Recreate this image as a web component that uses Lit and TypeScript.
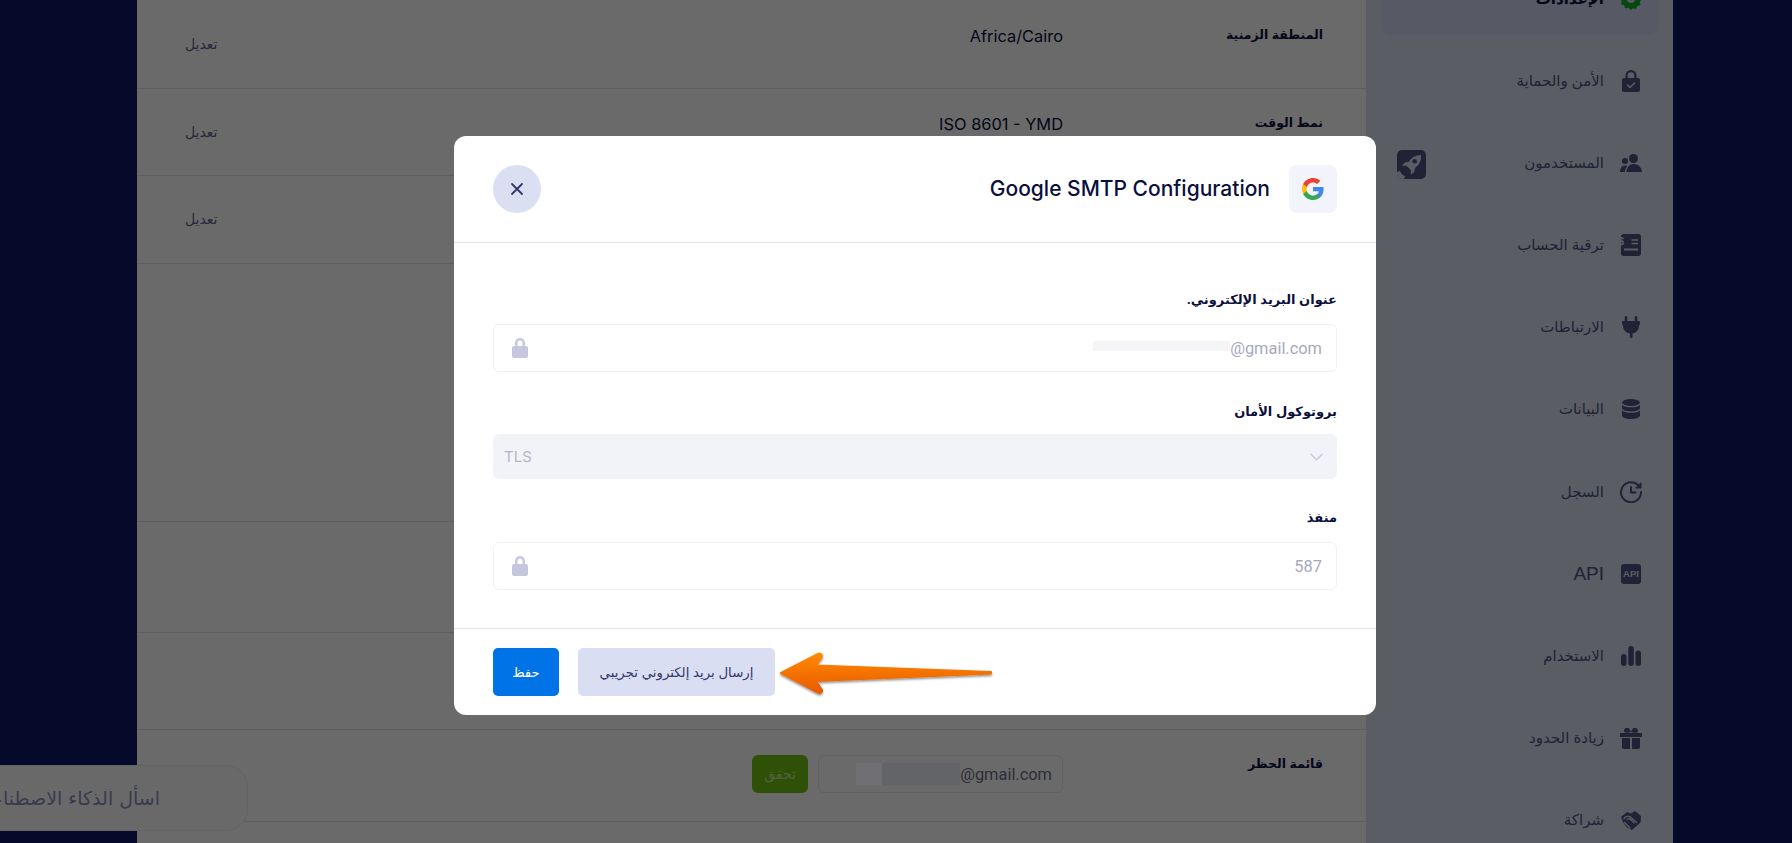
import { LitElement, html, css, svg } from "lit";
import { customElement } from "lit/decorators.js";

const ICONS: Record<string, unknown> = {
  gear: svg`<svg viewBox="0 0 22 22" width="22" height="22"><path fill="currentColor" fill-rule="evenodd" d="M11 0l2.6 2.2 3.3-.7 1 3.2 3.1 1.1-.7 3.3L22 11l-2.2 2.6.7 3.3-3.2 1-1.1 3.1-3.3-.7L11 22l-2.6-2.2-3.3.7-1-3.2-3.1-1.1.7-3.3L0 11l2.2-2.6-.7-3.3 3.2-1 1.1-3.1 3.3.7zM11 7a4 4 0 100 8 4 4 0 000-8z"/></svg>`,
  shield: svg`<svg viewBox="0 0 18 22" width="18" height="22"><path fill="currentColor" d="M9 0a5.500 5.500 0 015.500 5.500V8H16a2 2 0 012 2v10a2 2 0 01-2 2H2a2 2 0 01-2-2V10a2 2 0 012-2h1.500V5.500A5.500 5.500 0 019 0zm0 2.200a3.300 3.300 0 00-3.300 3.300V8h6.600V5.500A3.300 3.300 0 009 2.200z"/><path fill="none" stroke="var(--panel)" stroke-width="1.500" stroke-linecap="round" stroke-linejoin="round" d="M5.500 15l2.500 2.500 4.500-4.500"/></svg>`,
  users: svg`<svg viewBox="0 0 22 18" width="22" height="18"><circle cx="13.500" cy="4.500" r="4.500" fill="currentColor"/><circle cx="5" cy="7" r="3" fill="currentColor"/><path fill="currentColor" d="M6.500 18c0-4.500 3-8 7.200-8s8.300 3.500 8.300 8zM0 18c0-3.500 1.800-6.500 4.800-6.500 1 0 1.900.3 2.600.8C5.800 13.800 5 15.800 5 18z"/></svg>`,
  invoice: svg`<svg viewBox="0 0 20 22" width="20" height="22"><rect width="20" height="22" rx="2.500" fill="currentColor"/><text x="3" y="11" font-size="10" font-weight="700" font-family="Liberation Sans, sans-serif" fill="var(--panel)">$</text><path stroke="var(--panel)" stroke-width="1.600" d="M10.500 6h6.500M10.500 9.500h6.500"/><path stroke="var(--panel)" stroke-width="2" d="M3 15.500h14"/></svg>`,
  plug: svg`<svg viewBox="0 0 18 22" width="18" height="22"><path fill="currentColor" d="M4 0a1.300 1.300 0 011.300 1.300V5H12.700V1.300a1.300 1.300 0 012.600 0V5H17a1 1 0 011 1v2a1 1 0 01-1 1v1a7.500 7.500 0 01-6.500 7.400V20.700a1.300 1.300 0 01-2.600 0V17.400A7.500 7.500 0 011 10V9a1 1 0 01-1-1V6a1 1 0 011-1h1.700V1.300A1.300 1.300 0 014 0z"/></svg>`,
  db: svg`<svg viewBox="0 0 18 20" width="18" height="20"><ellipse cx="9" cy="3.500" rx="9" ry="3.500" fill="currentColor"/><path fill="currentColor" d="M0 5.700C1.500 7.500 5 8.300 9 8.300s7.500-.8 9-2.600V9c0 1.900-4 3.400-9 3.400S0 10.900 0 9zM0 11.200c1.500 1.800 5 2.600 9 2.600s7.500-.8 9-2.600v5.300c0 1.900-4 3.500-9 3.500s-9-1.600-9-3.500z"/></svg>`,
  history: svg`<svg viewBox="0 0 22 22" width="22" height="22" fill="none" stroke="currentColor" stroke-width="2" stroke-linecap="round" stroke-linejoin="round"><path d="M19 5.200A10 10 0 1021 11"/><path d="M11 6v5.500h4.500"/><path fill="currentColor" stroke-width="1" d="M21 2v5h-5z"/></svg>`,
  bars: svg`<svg viewBox="0 0 20 20" width="20" height="20" fill="currentColor"><rect y="8" width="5.500" height="12" rx="2.700"/><rect x="7.300" width="5.500" height="20" rx="2.700"/><rect x="14.500" y="4.500" width="5.500" height="15.500" rx="2.700"/></svg>`,
  gift: svg`<svg viewBox="0 0 22 22" width="22" height="22" fill="currentColor"><path fill-rule="evenodd" d="M0 6h22v4H0zM7 1a2.500 2.500 0 012.800 1.300L11 5 8 5.800H6A2.300 2.300 0 017 1zm8 0a2.300 2.300 0 011 4.800h-2L11 5l1.200-2.700A2.500 2.500 0 0115 1z"/><path d="M2 11h8v11H4a2 2 0 01-2-2zM12 11h8v9a2 2 0 01-2 2h-6z"/></svg>`,
  hands: svg`<svg viewBox="0 0 20 19" width="20" height="19"><path fill="currentColor" d="M0 6l6-5 4 1.500L14 0l6 5-.5 6.500L11 19l-5-2.500L2.500 12z"/><path fill="none" stroke="var(--panel)" stroke-width="1.400" stroke-linecap="round" d="M3 7.500c1.500-2 4.500-3 6.500-1.500l6 5.500M3.500 11.500L9 17M6 8.500c1.500-1 3-.8 4 .2l3 3"/></svg>`,
};

const NAV = [
  { label: "الإعدادات", icon: "gear", active: true },
  { label: "الأمن والحماية", icon: "shield" },
  { label: "المستخدمون", icon: "users" },
  { label: "ترقية الحساب", icon: "invoice" },
  { label: "الارتباطات", icon: "plug" },
  { label: "البيانات", icon: "db" },
  { label: "السجل", icon: "history" },
  { label: "API", icon: "api", latin: true },
  { label: "الاستخدام", icon: "bars" },
  { label: "زيادة الحدود", icon: "gift" },
  { label: "شراكة", icon: "hands" },
];

const lock = svg`<svg class="lock" viewBox="0 0 16 20" width="16" height="20"><path fill="currentColor" d="M8 0a5 5 0 015 5v3h1a2 2 0 012 2v8a2 2 0 01-2 2H2a2 2 0 01-2-2v-8a2 2 0 012-2h1V5a5 5 0 015-5zm0 2.500A2.500 2.500 0 005.500 5v3h5V5A2.500 2.500 0 008 2.500z"/></svg>`;

@customElement("app-root")
export class AppRoot extends LitElement {
  static styles = css`
    :host {
      display: block;
      position: relative;
      width: 1792px;
      height: 843px;
      overflow: hidden;
      font-family: "Inter", "Liberation Sans", "DejaVu Sans", sans-serif;
      color: #0a0f3c;
      --panel: #dbe0f2;
    }
    .page { display: flex; height: 843px; background: #0c1966; direction: ltr; }
    .gutter-left { width: 137px; flex: none; }
    .gutter-right { width: 119px; flex: none; }
    .main { width: 1229px; flex: none; background: #fff; direction: rtl; padding-top: 1px; box-sizing: border-box; }
    .row {
      display: grid;
      grid-template-columns: 260px 1fr auto;
      padding: 0 43px 0 48px;
      border-bottom: 1px solid #e2e2e6;
      box-sizing: border-box;
    }
    .row-label { font: 700 12.500px/20px "Liberation Sans", "DejaVu Sans", sans-serif; padding-top: 24px; color: #0a0f3c; }
    .row-value { font-size: 16.400px; line-height: 20px; padding-top: 25px; color: #0a0f3c; }
    .row-edit { font: 14px/20px "Liberation Sans", "DejaVu Sans", sans-serif; padding-top: 33px; color: #5c6390; }
    .verify { display: flex; gap: 10px; padding-top: 25px; }
    .verify-input {
      width: 245px; height: 38px; box-sizing: border-box; border: 1px solid #e8e8ee; border-radius: 6px;
      display: flex; align-items: center; padding: 0 10px; font: 16.400px "Roboto", sans-serif; color: #6d6f8c;
    }
    .ltr { direction: ltr; unicode-bidi: isolate; }
    .blur-block {
      position: relative; z-index: 1; display: inline-block; width: 104px; height: 22px;
      background: linear-gradient(to left, #636468 75%, #707074 75%);
    }
    .verify-btn {
      width: 56px; height: 38px; border: 0; border-radius: 6px; background: #70c111; color: #c8e6a0;
      font: 14px "Liberation Sans", "DejaVu Sans", sans-serif; padding: 0;
    }
    .side { width: 307px; flex: none; background: var(--panel); direction: rtl; overflow: hidden; }
    .nav { margin-top: -38px; padding: 0 14px 0 15px; display: flex; flex-direction: column; gap: 9.200px; }
    .nav-item {
      height: 73px; flex: none; display: flex; align-items: center; gap: 16px; padding-right: 17px; border-radius: 10px;
      font: 15px "Liberation Sans", "DejaVu Sans", sans-serif; color: #4f5380;
    }
    .nav-item.active { background: #d2d7f0; font-weight: 700; color: #0a0f3c; }
    .nav-item .ic { width: 22px; flex: none; display: flex; justify-content: center; color: #4f5380; }
    .nav-item.active .ic { color: #12ad26; }
    .nav-item.latin { font-size: 19px; }
    .api-ic {
      width: 20px; height: 20px; border-radius: 3px; background: #4f5380; color: var(--panel); font: 700 9.500px/20px "Liberation Sans", sans-serif;
      text-align: center; direction: ltr;
    }
    .rocket { position: absolute; left: 1397px; top: 150px; width: 29px; height: 29px; display: block; }
    .chat {
      position: absolute; left: -100px; top: 765px; width: 348px; height: 66px; box-sizing: border-box; overflow: hidden;
      background: #fdfdfe; border: 1px solid #ecedf3; border-radius: 0 22px 22px 0; direction: rtl;
      display: flex; align-items: center; padding-right: 87px; white-space: nowrap;
      font: 19px "DejaVu Sans", sans-serif; color: #8a8eb8;
    }
    .scrim { position: absolute; inset: 0; background: rgba(0, 0, 0, 0.585); padding: 136px 0 0 454px; }
    .modal { width: 922px; background: #fff; border-radius: 12px; direction: rtl; position: relative; }
    .m-head { display: flex; align-items: center; padding: 29px 39px; border-bottom: 1px solid #e3e5f5; }
    .g-box { width: 48px; height: 48px; border-radius: 8px; background: #f2f3fb; display: flex; align-items: center; justify-content: center; }
    .m-title { direction: ltr; font-size: 21px; font-weight: 500; line-height: 24px; margin-right: 19px; color: #0a0f3c; }
    .close {
      margin-right: auto; width: 48px; height: 48px; border: 0; border-radius: 50%; background: #dadff2; padding: 0;
      display: flex; align-items: center; justify-content: center; color: #34386a;
    }
    .m-body { padding: 47px 39px 38px; display: flex; flex-direction: column; }
    .f-label { font: 700 13px/20px "Liberation Sans", "DejaVu Sans", sans-serif; color: #0a0f3c; margin-bottom: 14px; }
    .f-label.tight { margin-bottom: 12px; }
    .f-input {
      height: 48px; box-sizing: border-box; border: 1px solid #f0f1f7; border-radius: 6px; display: flex; align-items: center;
      padding: 0 14px 0 18px; margin-bottom: 30px; font: 16.400px "Roboto", sans-serif; color: #a7a9c0;
    }
    .f-input.last { margin-bottom: 0; }
    .f-input .lock { margin-right: auto; color: #c5c7de; }
    .mask { width: 137px; height: 10px; background: #f5f5f7; margin-top: -4px; }
    .f-select {
      height: 45px; box-sizing: border-box; border-radius: 6px; background: #f2f3f9; display: flex; align-items: center; justify-content: space-between;
      padding: 0 14px 0 11px; margin-bottom: 29px; direction: ltr; font: 15px "Inter", sans-serif; color: #b5b6c2;
    }
    .m-foot { border-top: 1px solid #e3e5f5; padding: 19px 39px; display: flex; gap: 19px; direction: ltr; }
    .btn { height: 48px; border: 0; border-radius: 5px; padding: 0; font: 13.300px "Liberation Sans", "DejaVu Sans", sans-serif; direction: rtl; }
    .btn.save { width: 66px; background: #0073e6; color: #fff; }
    .btn.test { width: 197px; background: #d9def2; color: #34386a; }
    .arrow { position: absolute; left: 324px; top: 512px; }
  `;

  private renderNav() {
    return NAV.map(
      (n) => html`<div class="nav-item ${n.active ? "active" : ""} ${n.latin ? "latin" : ""}">
        <span class="ic">${n.icon === "api" ? html`<span class="api-ic">API</span>` : ICONS[n.icon]}</span>
        <span>${n.label}</span>
      </div>`
    );
  }

  render() {
    return html`
      <div class="page">
        <div class="gutter-left"></div>
        <div class="main">
          <div class="row" style="height:88px">
            <div class="row-label">المنطقة الزمنية</div><div class="row-value">Africa/Cairo</div><div class="row-edit">تعديل</div>
          </div>
          <div class="row" style="height:87px">
            <div class="row-label">نمط الوقت</div><div class="row-value">ISO 8601 - YMD</div><div class="row-edit">تعديل</div>
          </div>
          <div class="row" style="height:88px">
            <div class="row-label"></div><div class="row-value"></div><div class="row-edit">تعديل</div>
          </div>
          <div class="row" style="height:258px"></div>
          <div class="row" style="height:111px"></div>
          <div class="row" style="height:97px"></div>
          <div class="row" style="height:92px">
            <div class="row-label">قائمة الحظر</div>
            <div class="verify">
              <div class="verify-input"><span class="ltr">@gmail.com</span><span class="blur-block"></span></div>
              <button class="verify-btn">تحقق</button>
            </div>
            <div></div>
          </div>
        </div>
        <nav class="side"><div class="nav">${this.renderNav()}</div></nav>
        <div class="gutter-right"></div>
      </div>

      <svg class="rocket" viewBox="0 0 29 29">
        <rect width="29" height="29" rx="5" fill="#4f5380"/>
        <path fill="#dbe0f2" d="M24 5c-5.500.3-9.500 2.500-12 6.500l-4.500 1.200-2.500 3.300 4.500-.2 4.500 4.500-.3 4.500 3.300-2.500 1.200-4.500C22 15.500 24.500 10.500 24 5z"/>
        <path fill="#dbe0f2" d="M0 22l3-1c1 3 3 4.500 5 5l-1 3H5a5 5 0 01-5-5z"/>
        <circle cx="17.700" cy="11.300" r="2.300" fill="#4f5380"/>
      </svg>

      <div class="chat">اسأل الذكاء الاصطناعي...</div>

      <div class="scrim">
        <div class="modal" role="dialog">
          <div class="m-head">
            <div class="g-box">
              <svg viewBox="0 0 24 24" width="24" height="24">
                <path fill="#4285F4" d="M22.560 12.250c0-.78-.07-1.530-.2-2.250H12v4.260h5.920c-.26 1.370-1.040 2.530-2.210 3.310v2.770h3.570c2.080-1.920 3.280-4.740 3.280-8.090z"/>
                <path fill="#34A853" d="M12 23c2.970 0 5.460-.98 7.280-2.660l-3.570-2.770c-.98.66-2.230 1.060-3.710 1.060-2.860 0-5.290-1.930-6.160-4.530H2.180v2.840C3.990 20.530 7.700 23 12 23z"/>
                <path fill="#FBBC05" d="M5.840 14.090c-.22-.66-.35-1.360-.35-2.090s.13-1.430.35-2.090V7.070H2.180C1.430 8.550 1 10.220 1 12s.43 3.450 1.180 4.930l2.850-2.220.81-.62z"/>
                <path fill="#EA4335" d="M12 5.380c1.620 0 3.060.56 4.210 1.640l3.150-3.150C17.450 2.090 14.970 1 12 1 7.700 1 3.990 3.470 2.180 7.070l3.660 2.840c.87-2.600 3.300-4.530 6.160-4.530z"/>
              </svg>
            </div>
            <div class="m-title">Google SMTP Configuration</div>
            <button class="close" aria-label="close">
              <svg viewBox="0 0 14 14" width="14" height="14" fill="none" stroke="currentColor" stroke-width="1.800" stroke-linecap="round"><path d="M2 2l10 10M12 2L2 12"/></svg>
            </button>
          </div>
          <div class="m-body">
            <div class="f-label">عنوان البريد الإلكتروني.</div>
            <div class="f-input"><span class="ltr">@gmail.com</span><span class="mask"></span>${lock}</div>
            <div class="f-label tight">بروتوكول الأمان</div>
            <div class="f-select">
              <span>TLS</span>
              <svg viewBox="0 0 14 8" width="13" height="8" fill="none" stroke="#c9cad6" stroke-width="1.600" stroke-linecap="round" stroke-linejoin="round"><path d="M1 1l6 6 6-6"/></svg>
            </div>
            <div class="f-label">منفذ</div>
            <div class="f-input last"><span>587</span>${lock}</div>
          </div>
          <div class="m-foot">
            <button class="btn save">حفظ</button>
            <button class="btn test">إرسال بريد إلكتروني تجريبي</button>
          </div>
          <svg class="arrow" viewBox="0 0 220 50" width="220" height="50">
            <defs>
              <linearGradient id="ag" x1="0" y1="0" x2="0" y2="1"><stop offset="0" stop-color="#ff8a00"/><stop offset="1" stop-color="#e85a00"/></linearGradient>
              <filter id="as" x="-5%" y="-20%" width="110%" height="150%"><feDropShadow dx="0" dy="1.500" stdDeviation="1" flood-color="#000" flood-opacity=".45"/></filter>
            </defs>
            <path fill="url(#ag)" filter="url(#as)" stroke="url(#ag)" stroke-width="2" stroke-linejoin="round" d="M3 25L40 6c3-1.500 5 2 3.500 4L38 17.500 213 24v1.500L38 33l5.500 8c1.500 2.500-1 5-3.500 3.500z"/>
          </svg>
        </div>
      </div>
    `;
  }
}
